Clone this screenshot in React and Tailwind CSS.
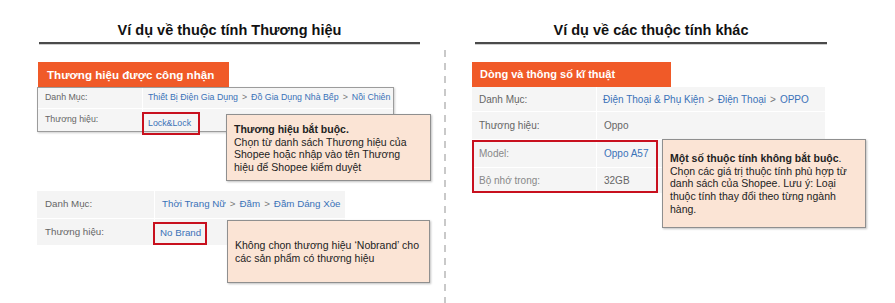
import React from 'react';

const Callout = ({ className, children }) => (
  <div
    className={`absolute border-[1.5px] border-[#8f8f8f] bg-[#fbe4d5] text-[10.5px] leading-[12.7px] text-[#222] shadow-[1px_1px_2px_rgba(0,0,0,0.25)] ${className}`}
  >
    {children}
  </div>
);

const Title = ({ className, children }) => (
  <div
    className={`mt-[21px] border-b-2 border-[#4a4a4a] pb-[3px] text-center text-[14.5px] font-bold leading-[18px] text-[#111] shadow-[0_1px_0_#cfcfcf] ${className}`}
  >
    {children}
  </div>
);

const Arrow = () => <span className="mx-[4px] text-[#777]">&gt;</span>;

const App = () => {
  return (
    <div
      className="flex h-[303px] w-[895px] overflow-hidden bg-white"
      style={{ fontFamily: '"Liberation Sans", Arial, sans-serif' }}
    >
      {/* Left: brand attribute */}
      <div className="relative h-full w-[444px] pl-[38px]">
        <Title className="ml-px w-[381px]">Ví dụ về thuộc tính Thương hiệu</Title>

        <div className="mt-[18px] flex h-[25px] w-[191px] items-center whitespace-nowrap bg-[#f05a28] px-[9px] text-[11.6px] font-bold text-white">
          Thương hiệu được công nhận
        </div>

        {/* table 1 */}
        <div className="-ml-px w-[357px] whitespace-nowrap border border-[#9c9c9c] bg-[#f5f5f5] text-[8.8px] text-[#666] shadow-[1px_1px_2px_rgba(0,0,0,0.2)]">
          <div className="flex h-[21px] items-center border-b border-white">
            <div className="flex h-full w-[105px] items-center border-r border-white pl-[7px]">Danh Mục:</div>
            <div className="pl-[5px] text-[#3a72b8]">
              Thiết Bị Điện Gia Dụng<Arrow />Đồ Gia Dụng Nhà Bếp<Arrow />Nồi Chiên
            </div>
          </div>
          <div className="flex h-[22px] items-start">
            <div className="flex h-full w-[105px] items-center border-r border-white pl-[7px]">Thương hiệu:</div>
            <div className="-ml-px mt-[3px] flex h-[23px] w-[58px] items-center border-[2.5px] border-[#c8101e] pl-[4px] text-[#3a72b8]">
              Lock&amp;Lock
            </div>
          </div>
        </div>

        {/* table 2 */}
        <div className="-ml-px mt-[59px] w-[308px] whitespace-nowrap bg-[#f4f4f4] text-[9.75px] text-[#666]">
          <div className="flex h-[28px] items-center border-b border-white">
            <div className="flex h-full w-[118px] items-center border-r border-white pl-[8px]">Danh Mục:</div>
            <div className="pl-[7px] text-[#3a72b8]">
              Thời Trang Nữ<Arrow />Đầm<Arrow />Đầm Dáng Xòe
            </div>
          </div>
          <div className="flex h-[26px] items-start">
            <div className="flex h-full w-[118px] items-center border-r border-white pl-[8px]">Thương hiệu:</div>
            <div className="-ml-[2px] mt-[3px] flex h-[23px] w-[54px] items-center border-[2.5px] border-[#c8101e] pl-[5px] text-[#3a72b8]">
              No Brand
            </div>
          </div>
        </div>

        <Callout className="left-[226px] top-[114px] h-[67px] w-[205px] whitespace-nowrap px-[7px] pt-[8px]">
          <div className="font-bold">Thương hiệu bắt buộc.</div>
          Chọn từ danh sách Thương hiệu của
          <br />
          Shopee hoặc nhập vào tên Thương
          <br />
          hiệu để Shopee kiểm duyệt
        </Callout>

        <Callout className="left-[227px] top-[220px] flex h-[63px] w-[203px] items-center pl-[7px] pr-[10px]">
          <p className="w-full text-justify">Không chọn thương hiệu ‘Nobrand’ cho các sản phẩm có thương hiệu</p>
        </Callout>
      </div>

      {/* dashed separator */}
      <div className="mt-[50px] w-[2px] bg-[repeating-linear-gradient(to_bottom,#c9c9c9_0_7px,transparent_7px_13px)]" />

      {/* Right: other attributes */}
      <div className="relative h-full flex-1">
        <Title className="ml-[29px] w-[352px]">Ví dụ về các thuộc tính khác</Title>

        <div className="ml-[26px] mt-[18px] flex h-[25px] w-[199px] items-center whitespace-nowrap bg-[#f05a28] px-[8px] text-[11px] font-bold text-white">
          Dòng và thông số kĩ thuật
        </div>

        <div className="ml-[26px] w-[353px] whitespace-nowrap bg-[#f5f5f5] text-[10px] text-[#666]">
          <div className="flex h-[25px] items-center border-b border-white">
            <div className="flex h-full w-[125px] items-center border-r border-white pl-[7px]">Danh Mục:</div>
            <div className="pl-[6px] text-[#3a72b8]">
              Điện Thoại &amp; Phụ Kiện<Arrow />Điện Thoại<Arrow />OPPO
            </div>
          </div>
          <div className="flex h-[28px] items-center border-b border-white">
            <div className="flex h-full w-[125px] items-center border-r border-white pl-[7px]">Thương hiệu:</div>
            <div className="pl-[7px]">Oppo</div>
          </div>
          <div className="flex h-[28px] items-center border-b border-white">
            <div className="flex h-full w-[125px] items-center border-r border-white pl-[7px] text-[#888]">Model:</div>
            <div className="pl-[7px] text-[#3a72b8]">Oppo A57</div>
          </div>
          <div className="flex h-[25px] items-center">
            <div className="flex h-full w-[125px] items-center border-r border-white pl-[7px] text-[#888]">Bộ nhớ trong:</div>
            <div className="pl-[7px]">32GB</div>
          </div>
        </div>

        {/* red highlight over optional rows */}
        <div className="absolute left-[26px] top-[140px] h-[53px] w-[186px] border-[2.5px] border-[#c8101e]" />

        <Callout className="left-[216px] top-[139px] h-[89px] w-[204px] whitespace-nowrap px-[7px] pt-[12px]">
          <div>
            <span className="font-bold">Một số thuộc tính không bắt buộc</span>.
          </div>
          Chọn các giá trị thuộc tính phù hợp từ
          <br />
          danh sách của Shopee. Lưu ý: Loại
          <br />
          thuộc tính thay đổi theo từng ngành
          <br />
          hàng.
        </Callout>
      </div>
    </div>
  );
};

export default App;
